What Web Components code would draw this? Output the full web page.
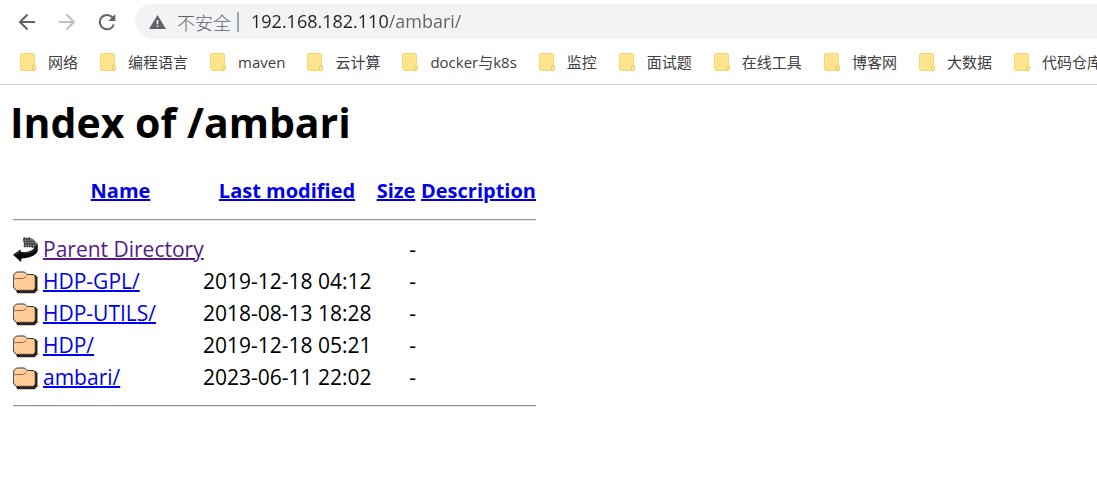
<!DOCTYPE html>
<html lang="zh-CN">
<head>
<meta charset="utf-8">
<title>Index of /ambari</title>
<style>
  body {
    margin: 0;
    background: #fff;
    color: #000;
    font-family: "Open Sans", "Noto Sans CJK SC", sans-serif;
  }
</style>
</head>
<body>
<browser-toolbar></browser-toolbar>
<bookmark-bar>
  <bookmark-folder>网络</bookmark-folder>
  <bookmark-folder>编程语言</bookmark-folder>
  <bookmark-folder>maven</bookmark-folder>
  <bookmark-folder>云计算</bookmark-folder>
  <bookmark-folder>docker与k8s</bookmark-folder>
  <bookmark-folder>监控</bookmark-folder>
  <bookmark-folder>面试题</bookmark-folder>
  <bookmark-folder>在线工具</bookmark-folder>
  <bookmark-folder>博客网</bookmark-folder>
  <bookmark-folder>大数据</bookmark-folder>
  <bookmark-folder>代码仓库</bookmark-folder>
</bookmark-bar>
<directory-index><span slot="title">Index of /ambari</span></directory-index>

<script>
function define(name, markup) {
  customElements.define(name, class extends HTMLElement {
    constructor() {
      super();
      this.attachShadow({ mode: "open" }).innerHTML = markup;
    }
  });
}

define("browser-toolbar", `
  <style>
    :host { display: block; }
    nav { display: flex; align-items: center; padding: 4px 0 0 15px; }
    button { font: inherit; border: 0; background: none; padding: 0; margin: 0; display: flex; align-items: center; color: #5f6368; }
    .nav { width: 24px; height: 24px; margin-right: 16px; justify-content: center; }
    .nav:disabled { color: #bdc1c6; }
    .omnibox { flex: 1; min-width: 0; height: 35px; display: flex; align-items: center; background: #f1f3f4; border-radius: 18px 0 0 18px; padding-left: 14px; font-size: 18px; }
    .chip { gap: 11px; font-size: 18px; font-weight: 300; line-height: 24px; font-family: "Noto Sans CJK SC", sans-serif; white-space: nowrap; }
    .rule { width: 2px; height: 20px; background: #a4a7aa; margin: 0 12px 0 6px; }
    input { flex: 1; min-width: 0; border: 0; padding: 0 0 2px; outline: 0; font: inherit; color: transparent;
      background: linear-gradient(90deg, #202124 137px, #5f6368 137px); -webkit-background-clip: text; background-clip: text; }
    svg { display: block; }
  </style>
  <nav aria-label="导航">
    <button class="nav" aria-label="后退"><svg width="18" height="18" viewBox="0 0 18 18" fill="none" stroke="currentColor" stroke-width="2"><path d="M17 9H2.5M9.5 1.5 2 9l7.500 7.500"/></svg></button>
    <button class="nav" aria-label="前进" disabled><svg width="18" height="18" viewBox="0 0 18 18" fill="none" stroke="currentColor" stroke-width="2"><path d="M1 9h14.500M8.500 1.500 16 9l-7.500 7.500"/></svg></button>
    <button class="nav" aria-label="重新加载"><svg width="18" height="18" viewBox="0 0 18 18"><path d="M14.300 4.200A7.200 7.200 0 1 0 15.800 11.500" fill="none" stroke="currentColor" stroke-width="2"/><path d="M17.300 1v7h-7z" fill="currentColor"/></svg></button>
    <div class="omnibox">
      <button class="chip"><svg width="17" height="16" viewBox="0 0 17 16"><path d="M8.500 1 17 15H0z" fill="#5f6368"/><path d="M7.700 6h1.600v4.200H7.700zM7.700 11.500h1.600V13H7.700z" fill="#f1f3f4"/></svg>不安全</button>
      <span class="rule"></span>
      <input type="text" aria-label="地址栏" value="192.168.182.110/ambari/" spellcheck="false">
    </div>
  </nav>`);

define("bookmark-bar", `
  <style>
    :host { display: block; border-bottom: 1px solid #d5d7da; overflow: hidden; }
    nav { display: flex; gap: 22px; height: 45px; align-items: center; padding-left: 20px; }
  </style>
  <nav aria-label="书签"><slot></slot></nav>`);

define("bookmark-folder", `
  <style>
    :host { display: block; flex: none; }
    button { display: flex; align-items: center; gap: 12px; border: 0; background: none; padding: 0; font: inherit; font-size: 15px; line-height: 20px; color: #3c4043; white-space: nowrap; }
    svg { display: block; }
  </style>
  <button><svg width="16" height="18" viewBox="0 0 16 18"><rect x=".5" y=".5" width="14" height="17" rx="1.500" fill="#ffe38d" stroke="#f3d878"/><path d="M12.500 17.500v-4l1.500-1.500 1.500 1.500v3l-1 1z" fill="#ffe38d" stroke="#ecca62"/></svg><span><slot></slot></span></button>`);

define("folder-icon", `
  <style>:host { display: block; padding-top: 3px; } svg { display: block; }</style>
  <svg width="25" height="23" viewBox="0 0 25 23">
    <path d="M4 22.300h17.500l3-3V6L22 3.500 3 19z" fill="#2b2119"/>
    <path d="M.700 4 3.500 1h8l2.500 2.500h6.500L22.500 6v11L20 19.500H3.500L.700 17z" fill="#ffcc99" stroke="#3a332d"/>
    <path d="M2 7.500h8.500l3-2.500" fill="none" stroke="#a86c3c"/>
    <path d="M2 5.500 4 2.500h7l1.500 1.500M2 9v7" fill="none" stroke="#ffe1c0"/>
    <path d="M21.500 6.500v11M4 18.800h16.500" stroke="#a87851" stroke-dasharray="1 1"/>
  </svg>`);

define("back-icon", `
  <style>:host { display: block; } svg { display: block; }</style>
  <svg width="25" height="25" viewBox="0 0 25 25">
    <path d="M10 1 12 0l2 1 2-1 4 2 4 4 .500 5-2 1-5-2-7-.500.500-3.500-1-2z" fill="#777"/>
    <path d="M10.500 2h7M10.500 4.500h11M11 7h12M11 9.500h13" stroke="#262626" stroke-width="1.500" stroke-dasharray="1.500 1"/>
    <path d="M24.700 6.500V14c-1.500 4-7 7-16.200 7.500L8 25 0 17.800 7.500 12.500l.500 2.500c7 .500 13-1.500 15.500-7z" fill="#080808"/>
    <path d="m3 17.500 4-3M10 16c6 0 10-1 13-4" fill="none" stroke="#555" stroke-width=".8"/>
  </svg>`);

const entries = [
  ["back-icon", "Parent Directory", "/", ""],
  ["folder-icon", "HDP-GPL/", "HDP-GPL/", "2019-12-18 04:12"],
  ["folder-icon", "HDP-UTILS/", "HDP-UTILS/", "2018-08-13 18:28"],
  ["folder-icon", "HDP/", "HDP/", "2019-12-18 05:21"],
  ["folder-icon", "ambari/", "ambari/", "2023-06-11 22:02"]
];
const rows = entries.map(([icon, label, href, date]) => `
  <tr><td><${icon}></${icon}></td><td><a${icon === "back-icon" ? ' class="seen"' : ""} href="${href}">${label}</a></td><td class="right">${date}</td><td class="right">-</td><td></td></tr>`).join("");

define("directory-index", `
  <style>
    :host { display: block; padding: 8px 10px; }
    h1 { margin: 0 0 24px; font-size: 41px; line-height: 58px; font-weight: 700; }
    table { border-spacing: 0; margin-left: 3px; font-size: 21px; line-height: 28px; table-layout: fixed; width: 523px; }
    .c-icon { width: 30px; } .c-name { width: 160px; } .c-date { width: 173px; } .c-size { width: 45px; }
    td, th { height: 32px; padding: 0 5px 0 0; text-align: left; white-space: nowrap; }
    th { text-align: center; font-size: 20px; }
    th:last-child, td:last-child { padding-right: 0; }
    .right { text-align: right; }
    .line { height: 26px; }
    hr { margin: 0; border: 0; border-top: 1px solid #949494; border-bottom: 1px solid #e6e6e6; }
    a { color: #0000ee; text-decoration-thickness: 2px; }
    a.seen { color: #551a8b; }
  </style>
  <h1><slot name="title"></slot></h1>
  <table>
    <colgroup><col class="c-icon"><col class="c-name"><col class="c-date"><col class="c-size"><col></colgroup>
    <thead>
      <tr><th></th><th><a href="?C=N;O=D">Name</a></th><th><a href="?C=M;O=A">Last modified</a></th><th><a href="?C=S;O=A">Size</a></th><th><a href="?C=D;O=A">Description</a></th></tr>
      <tr><td class="line" colspan="5"><hr></td></tr>
    </thead>
    <tbody>${rows}
      <tr><td class="line" colspan="5"><hr></td></tr>
    </tbody>
  </table>`);
</script>
</body>
</html>
